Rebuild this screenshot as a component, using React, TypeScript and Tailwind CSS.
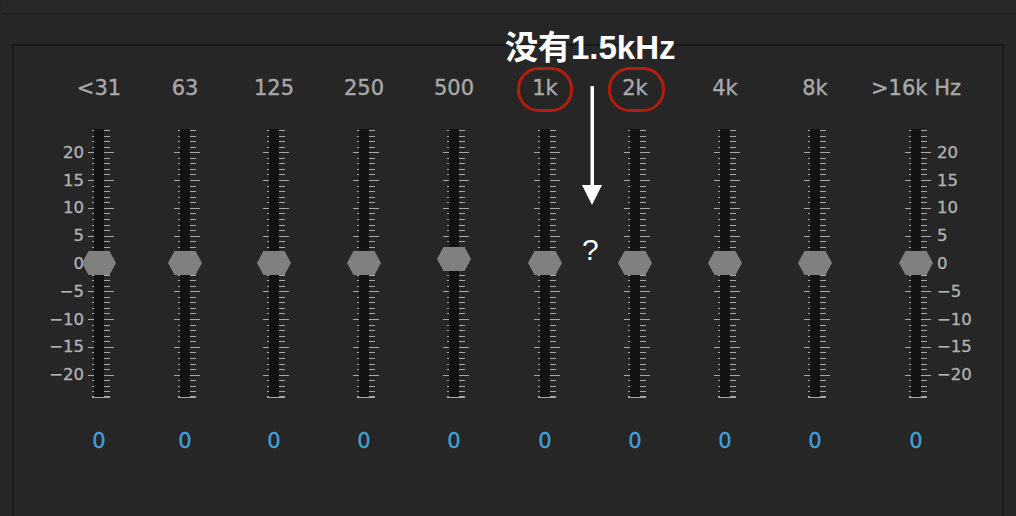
import React from 'react';

const bands = [
  { label: '<31', ml: 'ml-0', lift: 0 },
  { label: '63', ml: 'ml-[56px]', lift: 0 },
  { label: '125', ml: 'ml-[59px]', lift: 0 },
  { label: '250', ml: 'ml-[60px]', lift: 0 },
  { label: '500', ml: 'ml-[60px]', lift: 4 },
  { label: '1k', ml: 'ml-[61px]', lift: 0 },
  { label: '2k', ml: 'ml-[60px]', lift: 0 },
  { label: '4k', ml: 'ml-[60px]', lift: 0 },
  { label: '8k', ml: 'ml-[60px]', lift: 0 },
  { label: '>16k Hz', ml: 'ml-[71px]', lift: 0 },
];

const scale = ['20', '15', '10', '5', '0', '−5', '−10', '−15', '−20'];

const STEP = 5.56;

const Fader: React.FC<{ lift: number }> = ({ lift }) => {
  const ticks = [];
  for (let i = 0; i < 48; i++) {
    const y = Math.round(1 + i * STEP);
    const major = (24 - i) % 5 === 0;
    ticks.push(
      <g key={i}>
        <rect x={major ? -11 : -7} y={y} width={major ? 6 : 2} height={1} fill="#a6a6a6" />
        <rect x={5} y={y} width={major ? 10 : 6} height={1} fill="#a6a6a6" />
      </g>
    );
  }
  const cy = 134 - lift;
  return (
    <svg
      width="30"
      height="272"
      viewBox="-15 0 30 272"
      shapeRendering="crispEdges"
      className="block overflow-visible"
    >
      {ticks}
      <rect x={-7} y={267} width={18} height={2} fill="#a6a6a6" />
      <rect x={-5} y={0} width={10} height={268} fill="#121212" />
      <polygon
        points={`-17,${cy} -10.5,${cy - 12} 10.5,${cy - 12} 17,${cy} 10.5,${cy + 12} -10.5,${cy + 12}`}
        fill="#808080"
        shapeRendering="geometricPrecision"
      />
    </svg>
  );
};

const ScaleLabels: React.FC<{ align: 'left' | 'right' }> = ({ align }) => (
  <div
    className={`flex flex-col mt-[64.8px] text-[16.5px] text-[#b2b2b2] [-webkit-text-stroke:0.3px] ${align === 'right' ? 'items-end' : 'items-start'}`}
  >
    {scale.map(s => (
      <div key={s} className="h-[27.8px] leading-[27.8px] whitespace-nowrap">{s}</div>
    ))}
  </div>
);

export default function App() {
  return (
    <div
      className="relative w-[1016px] h-[516px] overflow-hidden bg-[#262626]"
      style={{ fontFamily: '"DejaVu Sans", Verdana, sans-serif' }}
    >
      <div className="h-[14px] ml-[2px] border-b border-[#1b1b1b] bg-[#282828]" />

      <div className="mt-[30px] mx-[12px] h-[480px] border-l-2 border-t-2 border-r-2 border-[#1a1a1a] bg-[#262626]">
        <div className="flex pt-[28px]">
          <div className="w-[70px] flex justify-end">
            <ScaleLabels align="right" />
          </div>
          {bands.map(b => (
            <div key={b.label} className={`${b.ml} w-[30px] flex flex-col items-center`}>
              <div className="h-[28px] leading-[28px] text-[21px] text-[#a9a9a9] whitespace-nowrap [-webkit-text-stroke:0.35px]">
                {b.label}
              </div>
              <div className="mt-[27px]">
                <Fader lift={b.lift} />
              </div>
              <div className="mt-[26px] h-[28px] leading-[28px] text-[21px] text-[#3fa3db] [-webkit-text-stroke:0.3px]">0</div>
            </div>
          ))}
          <div className="ml-[6px]">
            <ScaleLabels align="left" />
          </div>
        </div>
      </div>

      {/* annotations */}
      <div
        className="absolute left-[505px] top-[25px] text-[33px] leading-[40px] font-bold text-white whitespace-nowrap"
        style={{ fontFamily: '"Liberation Sans", "Noto Sans CJK SC", sans-serif' }}
      >
        <span style={{ fontFamily: '"Noto Sans CJK SC", sans-serif' }}>没有</span>
        <span>1.5kHz</span>
      </div>
      <div className="absolute left-[517px] top-[67px] w-[56px] h-[45px] rounded-[22px] border-[3.5px] border-[#b31d0d]" />
      <div className="absolute left-[608px] top-[67px] w-[57px] h-[45px] rounded-[22px] border-[3.5px] border-[#b31d0d]" />
      <svg className="absolute left-[580px] top-[85px]" width="24" height="122" viewBox="0 0 24 122">
        <rect x="10.5" y="1" width="3.5" height="104" fill="#ffffff" />
        <polygon points="2,100 22,100 12,120" fill="#ffffff" />
      </svg>
      <div
        className="absolute left-[582px] top-[230px] text-[30px] leading-[40px] text-white"
        style={{ fontFamily: '"Liberation Sans", sans-serif' }}
      >
        ?
      </div>
    </div>
  );
}
